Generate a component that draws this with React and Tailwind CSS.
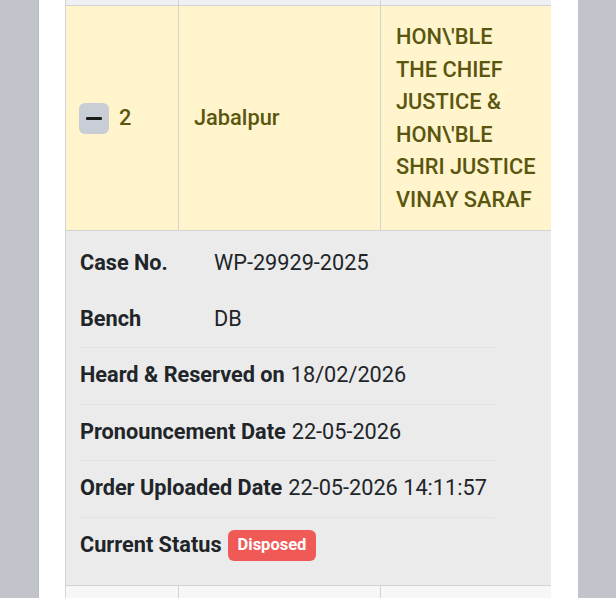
import React from "react";

const Row = ({ label, children, sep }) => (
  <div className={`h-[56.5px] flex items-center ${sep ? "border-t border-[#e2e2e2]" : ""}`}>
    <span className="font-bold">{label}</span>
    <span className="ml-[6px] flex items-center">{children}</span>
  </div>
);

export default function App() {
  return (
    <div
      className="w-[616px] h-[598px] bg-[#c1c4ca] flex justify-center overflow-hidden"
      style={{ fontFamily: "Roboto, 'Liberation Sans', sans-serif" }}
    >
      <div className="w-[540px] h-full bg-white border-l border-[#b8bbc0] pl-[26px]">
        <div className="w-[486px] overflow-hidden">
          {/* previous row tail */}
          <div className="grid grid-cols-[113px_202px_171px] h-[6px] bg-[#eef0f3] border-b border-[#d3d3d3]">
            <div className="border-l border-[#d3d3d3]" />
            <div className="border-l border-[#d3d3d3]" />
            <div className="border-l border-[#d3d3d3]" />
          </div>
          {/* highlighted row */}
          <div className="grid grid-cols-[113px_202px_171px] h-[225px] bg-[#fff4cc] text-[#5a5610] text-[21.8px] font-medium border-b border-[#d3d3d3]">
            <div className="border-l border-[#d3d3d3] flex items-center pl-[13px] gap-[10px]">
              <div className="w-[30px] h-[31px] rounded-[6px] bg-[#c8cdd6] flex items-center justify-center">
                <div className="w-[16px] h-[3px] bg-[#1c1c1c] rounded-[1px]" />
              </div>
              <span>2</span>
            </div>
            <div className="border-l border-[#d3d3d3] flex items-center pl-[15px]">Jabalpur</div>
            <div className="border-l border-[#d3d3d3] pl-[15px] pt-[15px] leading-[32.6px]">
              <div>HON\'BLE</div>
              <div>THE CHIEF</div>
              <div>JUSTICE &amp;</div>
              <div>HON\'BLE</div>
              <div className="whitespace-nowrap">SHRI JUSTICE</div>
              <div>VINAY SARAF</div>
            </div>
          </div>
          {/* detail row */}
          <div className="h-[355px] bg-[#ebebeb] border-l border-[#d3d3d3] border-b pl-[14px] pt-[4px] text-[21.7px] text-[#212529]">
            <div className="w-[414px]">
              <div className="h-[56px] flex items-center">
                <span className="font-bold w-[134px]">Case No.</span>
                <span>WP-29929-2025</span>
              </div>
              <div className="h-[56px] flex items-center">
                <span className="font-bold w-[134px]">Bench</span>
                <span>DB</span>
              </div>
              <Row label="Heard & Reserved on" sep>18/02/2026</Row>
              <Row label="Pronouncement Date" sep>22-05-2026</Row>
              <Row label="Order Uploaded Date" sep>22-05-2026 14:11:57</Row>
              <Row label="Current Status" sep>
                <span className="bg-[#ef5a56] text-white text-[16.5px] font-bold rounded-[6px] px-[10px] h-[31px] flex items-center">
                  Disposed
                </span>
              </Row>
            </div>
          </div>
          {/* next row start */}
          <div className="grid grid-cols-[113px_202px_171px] h-[20px] bg-[#f7f7f7]">
            <div className="border-l border-[#d3d3d3]" />
            <div className="border-l border-[#d3d3d3]" />
            <div className="border-l border-[#d3d3d3]" />
          </div>
        </div>
      </div>
    </div>
  );
}
